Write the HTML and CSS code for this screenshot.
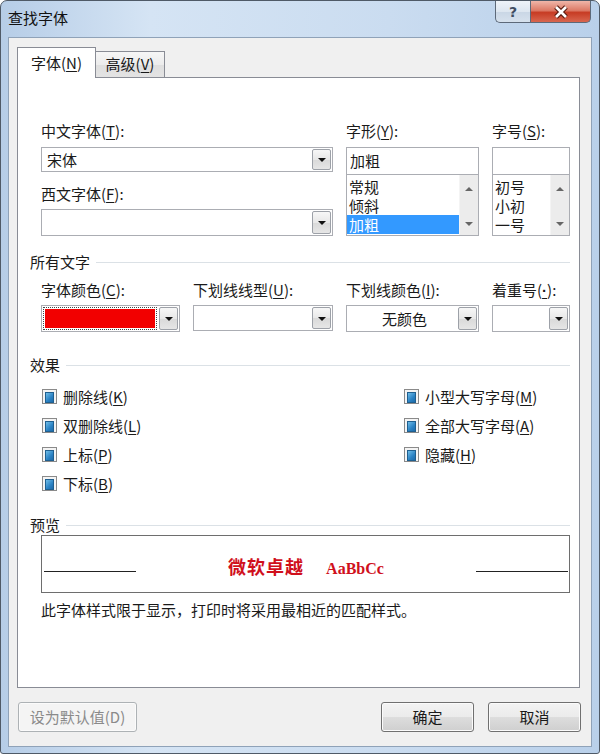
FILE: index.html
```html
<!DOCTYPE html>
<html lang="zh-CN">
<head>
  <meta charset="UTF-8">
  <title>查找字体</title>
  <link rel="stylesheet" href="styles.css">
</head>
<body>
  <div class="window">
    <div class="titlebar">
      <span class="title">查找字体</span>
      <div class="caption">
        <span class="cap help">?</span>
        <span class="cap close">
          <svg width="18" height="14" viewBox="0 0 18 14">
            <path d="M4 2 L14 12 M14 2 L4 12" stroke="#5a1a0e" stroke-width="5"/>
            <path d="M4 2 L14 12 M14 2 L4 12" stroke="#fff" stroke-width="2.6"/>
          </svg>
        </span>
      </div>
    </div>

    <div class="client">
      <div class="tabs">
        <span class="tab active">字体(<u>N</u>)</span>
        <span class="tab">高级(<u>V</u>)</span>
      </div>

      <div class="panel">
        <!-- font face / style / size -->
        <div class="indent font-grid">
          <div class="stack">
            <label>中文字体(<u>T</u>):</label>
            <div class="combo h25"><span class="field">宋体</span><span class="drop"></span></div>
            <label class="gap-top">西文字体(<u>F</u>):</label>
            <div class="combo h27 second"><span class="field"></span><span class="drop"></span></div>
          </div>
          <div class="stack">
            <label>字形(<u>Y</u>):</label>
            <div class="textbox">加粗</div>
            <div class="list">
              <div class="items">
                <div class="item">常规</div>
                <div class="item">倾斜</div>
                <div class="item sel">加粗</div>
              </div>
              <div class="vscroll"><span class="up"></span><span class="down"></span></div>
            </div>
          </div>
          <div class="stack">
            <label>字号(<u>S</u>):</label>
            <div class="textbox"></div>
            <div class="list">
              <div class="items">
                <div class="item">初号</div>
                <div class="item">小初</div>
                <div class="item">一号</div>
              </div>
              <div class="vscroll"><span class="up"></span><span class="down"></span></div>
            </div>
          </div>
        </div>

        <div class="group first">所有文字</div>
        <div class="indent color-grid">
          <div class="stack">
            <label>字体颜色(<u>C</u>):</label>
            <div class="combo h27"><span class="swatch-field"><span class="swatch"></span></span><span class="drop"></span></div>
          </div>
          <div class="stack">
            <label>下划线线型(<u>U</u>):</label>
            <div class="combo h26"><span class="field"></span><span class="drop"></span></div>
          </div>
          <div class="stack">
            <label>下划线颜色(<u>I</u>):</label>
            <div class="combo h27"><span class="field center">无颜色</span><span class="drop"></span></div>
          </div>
          <div class="stack">
            <label>着重号(<u class="dot">·</u>):</label>
            <div class="combo h27"><span class="field"></span><span class="drop"></span></div>
          </div>
        </div>

        <div class="group effects">效果</div>
        <div class="indent checks">
          <div class="check-col left">
            <div class="check"><span class="box"></span><span>删除线(<u>K</u>)</span></div>
            <div class="check"><span class="box"></span><span>双删除线(<u>L</u>)</span></div>
            <div class="check"><span class="box"></span><span>上标(<u>P</u>)</span></div>
            <div class="check"><span class="box"></span><span>下标(<u>B</u>)</span></div>
          </div>
          <div class="check-col">
            <div class="check"><span class="box"></span><span>小型大写字母(<u>M</u>)</span></div>
            <div class="check"><span class="box"></span><span>全部大写字母(<u>A</u>)</span></div>
            <div class="check"><span class="box"></span><span>隐藏(<u>H</u>)</span></div>
          </div>
        </div>

        <div class="group preview-head">预览</div>
        <div class="indent">
          <div class="preview">
            <span class="rule"></span>
            <span class="sample"><span class="cjk">微软卓越</span><span class="latin">AaBbCc</span></span>
            <span class="rule"></span>
          </div>
          <p class="note">此字体样式限于显示，打印时将采用最相近的匹配样式。</p>
        </div>
      </div>

      <div class="buttons">
        <span class="btn disabled">设为默认值(D)</span>
        <span class="btn ok">确定</span>
        <span class="btn">取消</span>
      </div>
    </div>
  </div>
</body>
</html>
```

FILE: styles.css
```css
* { box-sizing: border-box; }
body {
  margin: 0;
  background: #fff;
  font-family: "Noto Sans CJK SC", "Noto Sans", sans-serif;
  font-size: 15px;
  line-height: 20px;
  color: #1a1a1a;
}
u { text-decoration: underline; text-underline-offset: 2px; }
u.dot { font-family: "Liberation Sans", sans-serif; font-weight: bold; }
label { display: block; height: 20px; }

/* window frame */
.window {
  width: 600px;
  height: 754px;
  border: 1px solid #4f5a67;
  border-radius: 7px 7px 3px 3px;
  background: linear-gradient(90deg, #b6cde7, #d5e4f4 25%, #cadcf0 65%, #b9d0ea);
  display: flex;
  flex-direction: column;
  overflow: hidden;
}
.titlebar {
  height: 36px;
  display: flex;
  align-items: flex-start;
  padding: 0 8px 0 7px;
}
.title { line-height: 34px; color: #111; }
.caption { margin-left: auto; display: flex; }
.cap {
  height: 22px;
  display: flex;
  align-items: center;
  justify-content: center;
  border: 1px solid #5d6979;
  border-top: none;
}
.help {
  width: 35px;
  border-right: none;
  border-radius: 0 0 0 5px;
  background: linear-gradient(#eef3f9, #dde6f0 50%, #c9d6e5 51%, #d6e1ed);
  font-family: "DejaVu Sans", sans-serif;
  font-weight: bold;
  font-size: 14px;
  color: #3f4d62;
}
.close {
  width: 61px;
  border-radius: 0 0 5px 0;
  background: linear-gradient(#efb6a9, #dc7a66 45%, #c73c24 55%, #d8664f);
}

/* client area */
.client {
  flex: 1;
  margin: 0 7px 6px;
  background: #f0f0f0;
  border: 1px solid #8fa2b8;
  padding: 9px 9px 0 8px;
}
.tabs {
  display: flex;
  align-items: flex-end;
  height: 31px;
  margin-bottom: -1px;
  position: relative;
  z-index: 1;
}
.tab {
  height: 26px;
  width: 69px;
  margin-bottom: 1px;
  border: 1px solid #898c95;
  border-bottom: none;
  border-left: none;
  background: linear-gradient(#f6f6f6, #ececec 50%, #dfdfdf 51%, #e3e3e3);
  text-align: center;
  line-height: 24px;
}
.tab.active {
  height: 31px;
  width: 79px;
  margin-bottom: 0;
  border-left: 1px solid #898c95;
  background: #fff;
  line-height: 30px;
}

.panel {
  width: 563px;
  height: 611px;
  background: #fff;
  border: 1px solid #898c95;
  padding: 43px 9px 0 12px;
}
.indent { margin-left: 11px; }
.stack { display: flex; flex-direction: column; }

.font-grid {
  display: grid;
  grid-template-columns: 292px 133px 78px;
  column-gap: 13px;
}
.color-grid {
  display: grid;
  grid-template-columns: 139px 140px 133px 78px;
  column-gap: 13px;
  margin-top: 8px;
}
.gap-top { margin-top: 12px; }

/* combos, text boxes and lists */
.combo {
  display: flex;
  margin-top: 6px;
  border: 1px solid #abadb3;
  background: #fff;
}
.combo.second { margin-top: 5px; }
.color-grid .combo { margin-top: 5px; }
.h25 { height: 25px; }
.h26 { height: 26px; }
.h27 { height: 27px; }
.field {
  flex: 1;
  padding-left: 5px;
  display: flex;
  align-items: center;
}
.field.center { justify-content: center; }
.drop {
  width: 19px;
  margin: 1px;
  border: 1px solid #9da1a8;
  border-radius: 2px;
  background: linear-gradient(#f7f7f7, #e8e8e8 50%, #d9d9d9 51%, #e6e6e6);
  display: flex;
  align-items: center;
  justify-content: center;
}
.drop::after {
  content: "";
  border-left: 4px solid transparent;
  border-right: 4px solid transparent;
  border-top: 4px solid #111;
  margin-top: 1px;
}
.swatch-field { flex: 1; padding: 1px; }
.swatch {
  display: block;
  height: 100%;
  border: 1px dotted #444;
  padding: 1px;
  background: #f20000;
  background-clip: content-box;
}

.textbox {
  margin-top: 6px;
  height: 28px;
  border: 1px solid #abadb3;
  padding-left: 3px;
  line-height: 26px;
}
.list {
  height: 62px;
  margin-top: -1px;
  border: 1px solid #abadb3;
  display: flex;
}
.items { flex: 1; padding-top: 2px; }
.item { line-height: 19px; padding-left: 2px; }
.item.sel { background: #3399ff; color: #fff; }
.vscroll {
  width: 19px;
  background: #ececec;
  border-left: 1px solid #f4f4f4;
  display: flex;
  flex-direction: column;
  align-items: center;
  justify-content: space-between;
  padding: 12px 0 9px;
}
.vscroll .up {
  border-left: 4px solid transparent;
  border-right: 4px solid transparent;
  border-bottom: 4px solid #666;
}
.vscroll .down {
  border-left: 4px solid transparent;
  border-right: 4px solid transparent;
  border-top: 4px solid #666;
}

/* group headers */
.group {
  display: flex;
  align-items: center;
  gap: 6px;
  height: 20px;
}
.group::after {
  content: "";
  flex: 1;
  border-top: 1px solid #dbe1e6;
}
.group.first { margin-top: 16px; }
.group.effects { margin-top: 23px; }
.group.preview-head { margin-top: 17px; }

/* effect check boxes */
.checks { display: flex; margin-top: 7px; }
.check-col.left { width: 362px; }
.check {
  height: 29px;
  display: flex;
  align-items: center;
  gap: 6px;
  padding-left: 1px;
}
.box {
  width: 15px;
  height: 15px;
  border: 1px solid #8a8a8a;
  padding: 2px;
  background: #f4f4f4;
}
.box::before {
  content: "";
  display: block;
  height: 100%;
  border: 1px solid #1f5f8f;
  background: linear-gradient(135deg, #6fbde8, #2a82c4 60%, #1d6aa8);
}

/* preview */
.preview {
  height: 58px;
  border: 1px solid #6e6e6e;
  display: flex;
  align-items: flex-start;
  padding: 0 1px 0 2px;
}
.rule {
  width: 92px;
  margin-top: 35px;
  border-top: 1px solid #222;
}
.sample {
  flex: 1;
  text-align: center;
  margin-top: 17px;
  line-height: 26px;
  color: #d0101c;
  font-weight: bold;
}
.sample .cjk { font-size: 18px; letter-spacing: 1px; }
.sample .latin {
  font-family: "Liberation Serif", serif;
  font-size: 16px;
  margin-left: 22px;
}
.note { margin: 7px 0 0; }

/* dialog buttons */
.buttons {
  display: flex;
  gap: 14px;
  margin-top: 14px;
  padding: 0 1px;
}
.btn {
  height: 30px;
  width: 93px;
  border: 1px solid #707070;
  border-radius: 3px;
  box-shadow: inset 0 0 0 1px #fbfbfb;
  background: linear-gradient(#f3f3f3, #ebebeb 50%, #dddddd 51%, #cfcfcf);
  display: flex;
  align-items: center;
  justify-content: center;
}
.btn.ok { margin-left: auto; }
.btn.disabled {
  width: 119px;
  border-color: #adb2b5;
  background: #f4f4f4;
  color: #8a8a8a;
}
```
